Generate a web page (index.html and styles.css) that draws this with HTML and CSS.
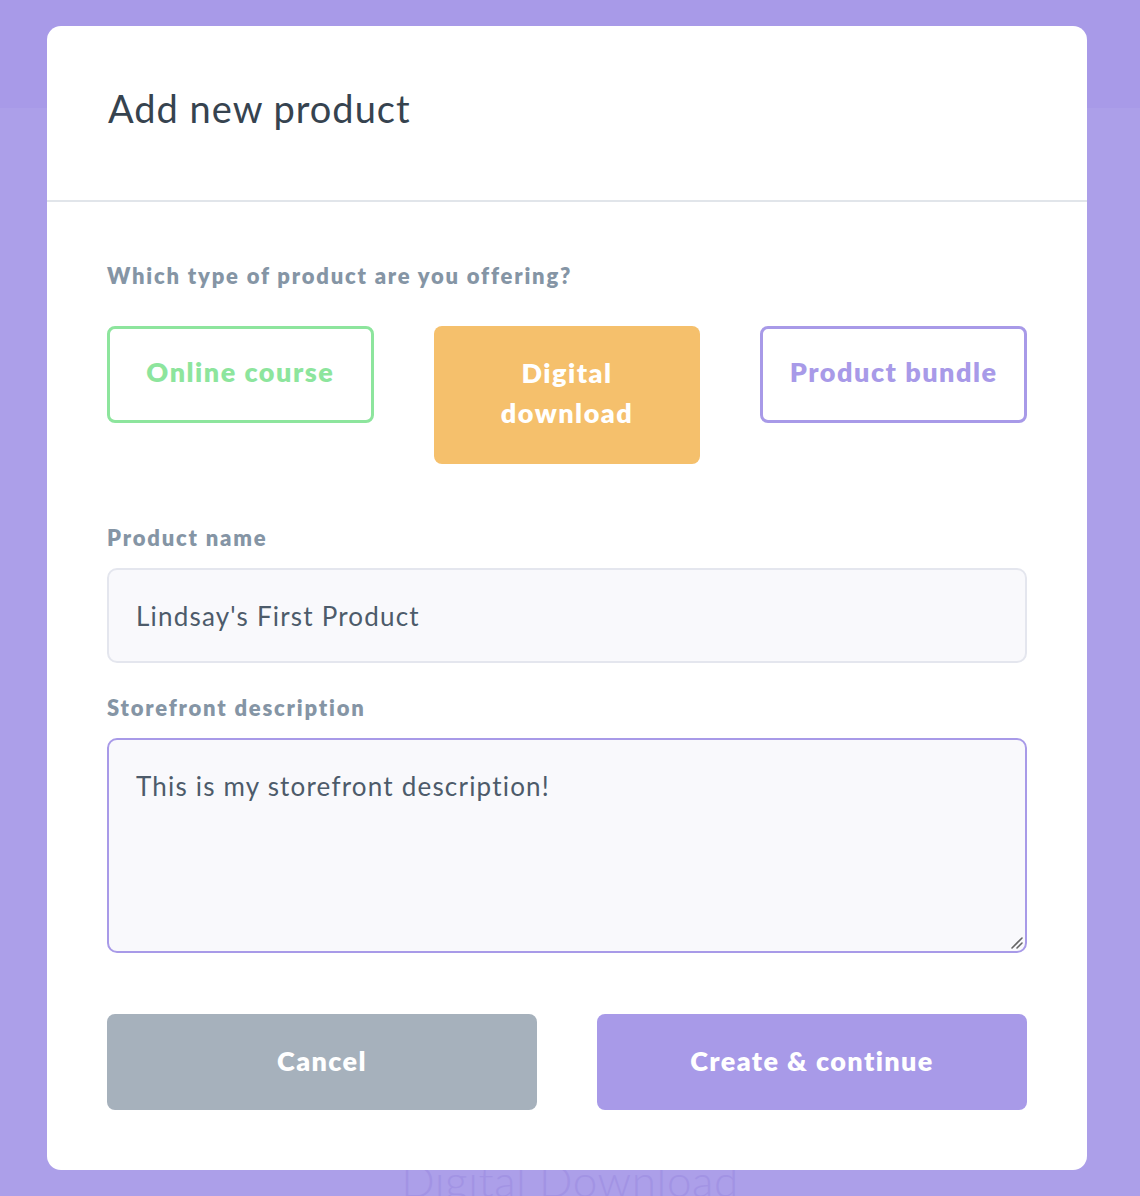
FILE: index.html
```html
<!DOCTYPE html>
<html>
<head>
<meta charset="utf-8">
<link rel="stylesheet" href="styles.css">
</head>
<body>
<div class="page">
  <div class="topbar"></div>
  <div class="page-content">
    <h2 class="page-title">Digital Download</h2>
  </div>
</div>
<div class="modal">
  <div class="modal-header">
    <h1 class="modal-title">Add new product</h1>
  </div>
  <div class="modal-body">
    <div class="field-label">Which type of product are you offering?</div>
    <div class="options">
      <button class="option option-green">Online course</button>
      <button class="option option-orange">Digital<br>download</button>
      <button class="option option-purple">Product bundle</button>
    </div>
    <label class="field-label label-name">Product name</label>
    <div class="input">Lindsay's First Product</div>
    <label class="field-label label-desc">Storefront description</label>
    <div class="textarea">This is my storefront description!
      <svg class="grip" width="14" height="14" viewBox="0 0 14 14"><path d="M3 13 L13 3 M8 13 L13 8" stroke="#666" stroke-width="1.6" stroke-linecap="round"/></svg>
    </div>
    <div class="actions">
      <button class="btn btn-cancel">Cancel</button>
      <button class="btn btn-create">Create &amp; continue</button>
    </div>
  </div>
</div>
</body>
</html>
```
FILE: styles.css
```css
* { box-sizing: border-box; }
html, body { margin: 0; padding: 0; }
body {
  background: #ac9fe9;
  font-family: Lato, "Open Sans", sans-serif;
  width: 1140px;
  height: 1196px;
  overflow: hidden;
  position: relative;
}
.topbar {
  height: 108px;
  background: #a89ae8;
}
.page-content {
  padding-top: 1047px;
  text-align: center;
}
.page-title {
  margin: 0;
  font-family: Lato, sans-serif;
  font-weight: 300;
  font-size: 44px;
  line-height: 50px;
  color: #a293e4;
  letter-spacing: 0.6px;
}
.modal {
  position: absolute;
  left: 47px;
  top: 26px;
  width: 1040px;
  height: 1144px;
  background: #fff;
  border-radius: 14px;
}
.modal-header {
  height: 176px;
  border-bottom: 2px solid #e1e5ea;
  padding: 62px 60px 0 61px;
}
.modal-title {
  margin: 0;
  font-weight: 400;
  font-size: 38px;
  line-height: 40px;
  color: #36434f;
  letter-spacing: 1px;
}
.modal-body {
  padding: 60px 60px 0 60px;
  display: flex;
  flex-direction: column;
}
.field-label {
  display: block;
  font-weight: 800;
  font-size: 22px;
  line-height: 28px;
  color: #8595a5;
  letter-spacing: 1.8px;
}
.options {
  display: flex;
  gap: 60px;
  align-items: flex-start;
  margin-top: 36px;
}
.option {
  width: 267px;
  height: 97px;
  border-radius: 8px;
  background: #fff;
  font-family: Lato, sans-serif;
  font-weight: 800;
  font-size: 27px;
  line-height: 40px;
  padding: 0 0 5px 0;
  letter-spacing: 1.5px;
}
.option-green { border: 3px solid #8de59d; color: #8de59d; }
.option-purple { border: 3px solid #a89ae8; color: #a89ae8; }
.option-orange {
  border: none;
  background: #f5c06c;
  color: #fff;
  height: 138px;
  padding: 0 0 4px 0;
}
.label-name { margin-top: 60px; }
.input {
  margin-top: 16px;
  height: 95px;
  background: #f9f9fc;
  border: 2px solid #e4e6ee;
  border-radius: 10px;
  padding: 0 27px;
  display: flex;
  align-items: center;
  font-size: 26px;
  color: #4d5b6a;
  letter-spacing: 1.2px;
}
.label-desc { margin-top: 31px; }
.textarea {
  position: relative;
  margin-top: 16px;
  height: 215px;
  background: #f9f9fc;
  border: 2px solid #a89ae8;
  border-radius: 10px;
  padding: 30px 27px;
  font-size: 26px;
  line-height: 32px;
  color: #4d5b6a;
  letter-spacing: 1.2px;
}
.grip {
  position: absolute;
  right: 2px;
  bottom: 2px;
}
.actions {
  display: flex;
  gap: 60px;
  margin-top: 61px;
}
.btn {
  flex: 1;
  height: 96px;
  border: none;
  border-radius: 8px;
  color: #fff;
  font-family: Lato, sans-serif;
  font-weight: 800;
  font-size: 27px;
  letter-spacing: 1.4px;
  padding: 0 0 4px 0;
}
.btn-cancel { background: #a6b1bc; }
.btn-create { background: #a89ae8; }
```
